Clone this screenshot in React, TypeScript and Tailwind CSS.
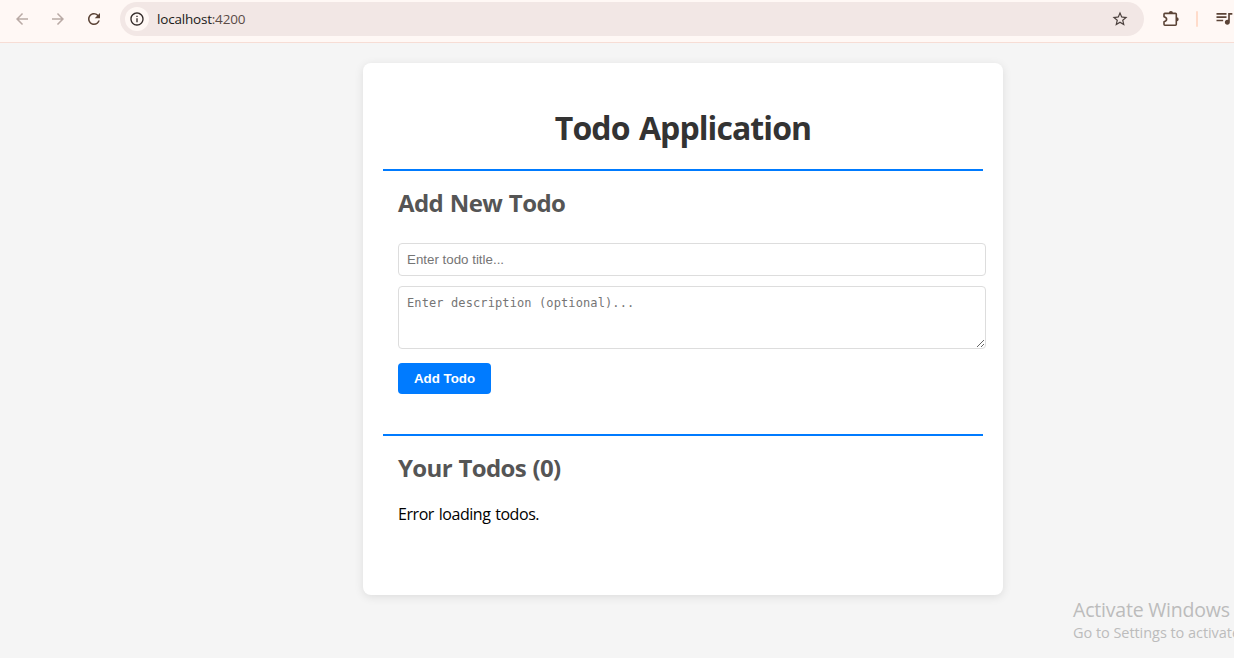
import React from 'react';
import { MdArrowBack, MdArrowForward, MdInfoOutline, MdQueueMusic, MdRefresh, MdStarBorder } from 'react-icons/md';

function PuzzleIcon() {
  return (
    <svg width="20" height="20" viewBox="0 0 20 20" fill="none" className="mb-px shrink-0">
      <path
        d="M3.9 4.4H14.4Q15.3 4.4 15.3 5.3V15.3Q15.3 16.2 14.4 16.2H3.9Q3 16.2 3 15.3V12.8Q5.6 12.2 5.6 10.3Q5.6 8.4 3 7.8V5.3Q3 4.4 3.9 4.4Z"
        stroke="#5b4336"
        strokeWidth="1.6"
        strokeLinejoin="round"
      />
      <path d="M7.8 4.2a2.1 2.1 0 0 1 4.2 0ZM15.6 8.2a2.1 2.1 0 0 1 0 4.2Z" fill="#5b4336" />
    </svg>
  );
}

function BrowserBar() {
  return (
    <header className="flex h-[43px] shrink-0 items-start border-b border-[#f7ddd5] bg-[#fff8f5]">
      <div className="flex h-[38px] w-[120px] shrink-0 items-center pl-[13px] text-[#b9aaa5]">
        <MdArrowBack size={18} />
        <MdArrowForward size={18} className="ml-[18px]" />
        <MdRefresh size={18} className="ml-[18px] text-[#5b4336]" />
      </div>
      <div className="mt-0.5 flex h-[34px] w-[1024px] shrink-0 items-center rounded-full bg-[#f2e7e5] pr-[15px] pl-[5px]">
        <span className="flex size-6 items-center justify-center rounded-full bg-[#fff8f5]">
          <MdInfoOutline size={16} color="#332b29" />
        </span>
        <span className="ml-2 flex-1 font-['Open_Sans',sans-serif] text-[13.5px] tracking-[-0.2px] text-[#201a18]">
          localhost<span className="text-[#5b4b46]">:4200</span>
        </span>
        <MdStarBorder size={18} color="#4b403d" />
      </div>
      <div className="flex h-[38px] items-center pl-[17px]">
        <PuzzleIcon />
        <span className="ml-[15px] h-4 w-0.5 shrink-0 rounded bg-[#ffdccb]" />
        <MdQueueMusic size={20} color="#5b4336" className="mb-0.5 ml-4 shrink-0" />
      </div>
    </header>
  );
}

function Section({ title, className, children }: { title: string; className: string; children: React.ReactNode }) {
  return (
    <section className={`border-t-2 border-[#007bff] px-[15px] ${className}`}>
      <h2 className="mt-4 text-[24px] leading-8 font-bold whitespace-nowrap text-[#555]">{title}</h2>
      {children}
    </section>
  );
}

export default function App() {
  return (
    <div className="relative flex h-[658px] w-[1234px] flex-col overflow-hidden bg-[#f5f5f5] font-['Open_Sans',sans-serif]">
      <BrowserBar />
      <main className="mt-5 ml-[363px] h-[532px] w-[640px] rounded-lg bg-white px-5 pt-[43px] shadow-[0_2px_10px_rgba(0,0,0,0.1)]">
        <h1 className="mb-5 text-center text-[32px] leading-[43px] font-bold tracking-[-0.92px] text-[#333] [word-spacing:2px]">
          Todo Application
        </h1>
        <Section title="Add New Todo" className="h-[265px] tracking-[-0.6px] [word-spacing:1px]">
          <form className="mt-6 flex w-[588px] flex-col items-start [word-spacing:0]" onSubmit={(e) => e.preventDefault()}>
            <input
              type="text"
              placeholder="Enter todo title..."
              className="h-[33px] w-full rounded border border-[#ddd] px-2 font-['Liberation_Sans',sans-serif] text-[13.333px] tracking-normal outline-none placeholder:text-[#757575]"
            />
            <textarea
              placeholder="Enter description (optional)..."
              className="mt-2.5 h-[63px] w-full resize-y rounded border border-[#ddd] p-2 font-['DejaVu_Sans_Mono',monospace] text-[12px] leading-4 tracking-[0.11px] outline-none placeholder:text-[#757575]"
            />
            <button className="mt-3.5 h-[31px] w-[93px] rounded bg-[#007bff] font-['Liberation_Sans',sans-serif] text-[13.333px] font-bold tracking-normal text-white">
              Add Todo
            </button>
          </form>
        </Section>
        <Section title="Your Todos (0)" className="tracking-[-0.65px] [word-spacing:1px]">
          <p className="mt-5 text-[16px] leading-[21px] tracking-[-0.44px] text-black">Error loading todos.</p>
        </Section>
      </main>
      <div className="absolute top-[597px] left-[1073px] whitespace-nowrap text-[#bcbcbc]">
        <p className="text-[19.5px] leading-[26px] tracking-[-0.2px]">Activate Windows</p>
        <p className="text-[14.5px] leading-5 tracking-[-0.05px]">Go to Settings to activate Windows.</p>
      </div>
    </div>
  );
}
